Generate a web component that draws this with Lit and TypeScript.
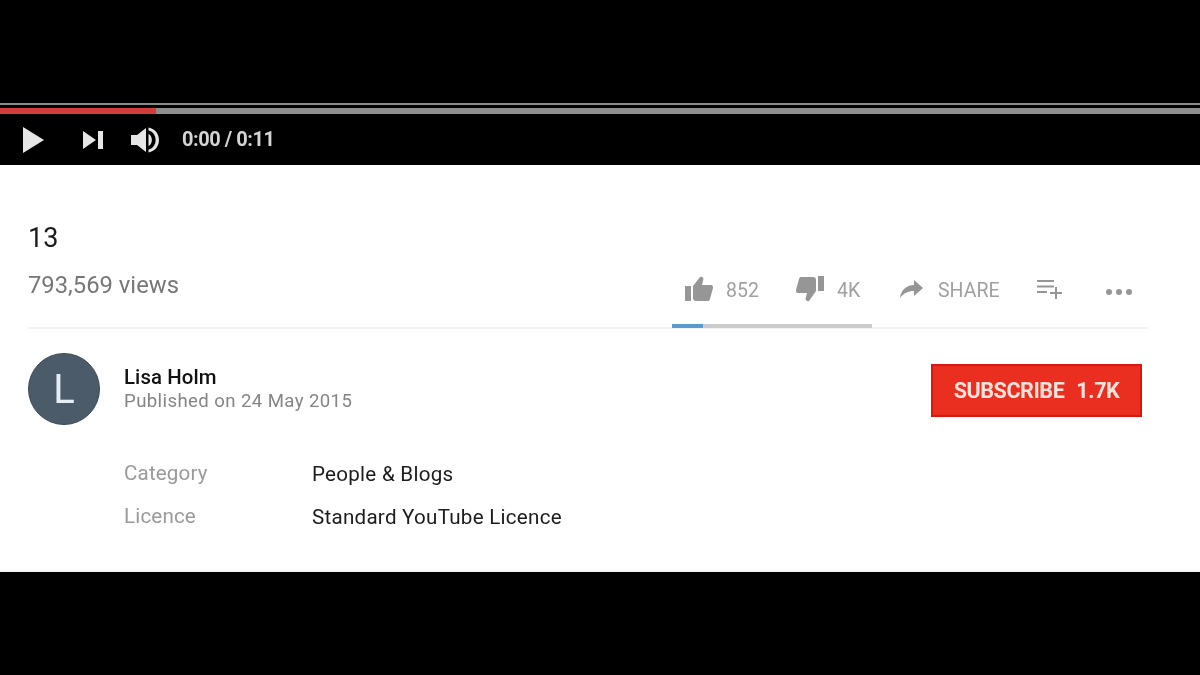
import { LitElement, html, css } from "lit";
import { customElement } from "lit/decorators.js";

@customElement("app-root")
export class AppRoot extends LitElement {
  static styles = css`
    :host { display: block; width: 1200px; height: 675px; background: #000; overflow: hidden; font-family: Roboto, "Liberation Sans", sans-serif; }
    .frame { filter: blur(0.4px); }
    .player { height: 165px; box-sizing: border-box; padding-top: 103px; background: #000; }
    .topline { height: 2px; background: #8a8a8a; }
    .progress { height: 6px; margin-top: 3px; background: #8f8f8f; }
    .played { width: 156px; height: 100%; background: #d23c3c; }
    .controls { display: flex; align-items: center; height: 51px; color: #e4e4e4; }
    .controls svg { display: block; fill: #e6e6e6; flex: none; }
    .play { margin-left: 22px; }
    .next { margin-left: 38px; }
    .vol { margin-left: 26px; }
    .time { margin: -2px 0 0 22px; font-size: 20px; font-weight: 700; letter-spacing: -0.45px; color: #d4d4d4; }
    .page { height: 407px; box-sizing: border-box; background: #fff; padding: 0 52px 0 28px; display: flex; flex-direction: column; border-bottom: 2px solid #f4f4f4; }
    .title { margin-top: 58px; font-size: 27px; line-height: 30px; color: #1c1c1c; }
    .meta { display: flex; height: 56px; border-bottom: 2px solid #f1f1f1; position: relative; margin-top: 18px; }
    .views { font-size: 23.8px; line-height: 26px; margin-top: 1px; color: #777; }
    .actions { position: absolute; left: 644px; top: 0; width: 476px; height: 57px; }
    .act { position: absolute; top: 5px; display: flex; align-items: center; gap: 13px; font-size: 19.5px; color: #a0a0a0; height: 28px; }
    .act svg { display: block; fill: #969696; flex: none; margin-top: -2px; }
    .sentiment { position: absolute; left: 0; bottom: 0; width: 200px; height: 4px; background: #cccccc; }
    .likes { width: 31px; height: 100%; background: #5b9bd0; }
    .owner { display: flex; align-items: center; margin-top: 24px; height: 72px; }
    .avatar { width: 72px; height: 72px; border-radius: 50%; background: #4c5b69; color: #e6eef5; display: flex; align-items: center; justify-content: center; font-size: 40px; font-weight: 400; flex: none; box-sizing: border-box; border: 1px solid #3b4752; }
    .who { margin-left: 24px; flex: 1; }
    .name { font-size: 20.4px; line-height: 24px; color: #111; letter-spacing: 0.1px; font-weight: 500; }
    .date { font-size: 18.6px; line-height: 24px; color: #858585; letter-spacing: 0.4px; }
    .sub { width: 211px; height: 53px; box-sizing: border-box; margin: 3px 6px 0 0; background: #ea2e20; border: 2px solid #d9170f; color: #fbe3dc; font-size: 21.5px; font-weight: 700; display: flex; align-items: center; justify-content: center; gap: 12px; letter-spacing: -0.4px; }
    .sub span + span { font-weight: 700; }
    .details { margin: 36px 0 0 96px; display: grid; grid-template-columns: 188px auto; justify-content: start; row-gap: 17px; font-size: 20.6px; line-height: 26px; }
    .k { color: #9a9a9a; letter-spacing: 0.15px; margin-top: -1px; }
    .v { color: #1c1c1c; letter-spacing: 0.25px; }
  `;

  render() {
    return html`
      <div class="frame">
      <div class="player">
        <div class="topline"></div>
        <div class="progress"><div class="played"></div></div>
        <div class="controls">
          <svg class="play" width="22" height="26" viewBox="0 0 22 26"><path d="M1 0 L22 13 L1 26 Z"/></svg>
          <svg class="next" width="22" height="20" viewBox="0 0 22 20"><path d="M1 1 L14 10 L1 19 Z"/><rect x="16" y="1" width="5" height="18"/></svg>
          <svg class="vol" width="30" height="28" viewBox="0 0 30 28"><path d="M1 9 H7 L16 2 V26 L7 19 H1 Z"/><path d="M18.5 8 C23 10 23 18 18.500 20 Z"/><path d="M18.5 1.500 C32.500 4 32.500 24 18.5 26.500 V23.500 C28 21.500 28 6.500 18.500 4.500 Z"/></svg>
          <span class="time">0:00 / 0:11</span>
        </div>
      </div>
      <div class="page">
        <div class="title">13</div>
        <div class="meta">
          <div class="views">793,569 views</div>
          <div class="actions">
            <div class="act" style="left:13px">
              <svg width="28" height="26" viewBox="0 0 28 26"><rect x="0" y="10" width="6" height="15"/><path d="M8 10 L15 1 C18 0 19 3 18 5 L17 9 H26 C28 9 28 11 28 12 L25 23 C24.500 25 23.500 25 22 25 H11 C9 25 8 24 8 22 Z"/></svg>
              <span>852</span>
            </div>
            <div class="act" style="left:124px">
              <svg width="28" height="26" viewBox="0 0 28 26"><rect x="22" y="0" width="6" height="15"/><path d="M20 15 L13 25 C10 26 9 23 10 21 L11 17 H2 C0 17 0 15 0 14 L3 3 C3.500 1 4.500 1 6 1 H17 C19 1 20 2 20 4 Z"/></svg>
              <span>4K</span>
            </div>
            <div class="act" style="left:228px">
              <svg width="23" height="18" viewBox="0 0 23 18"><path d="M14 0 L23 8 L14 16 V11 C8 11 4 13 0 18 C1 10 6 5.500 14 5 Z"/></svg>
              <span style="margin-left:2px">SHARE</span>
            </div>
            <div class="act" style="left:365px">
              <svg width="27" height="20" viewBox="0 0 27 20"><rect x="0" y="1" width="17" height="2"/><rect x="0" y="6.500" width="17" height="2"/><rect x="0" y="12" width="10" height="2"/><rect x="13" y="13" width="12" height="2"/><rect x="18" y="8" width="2" height="12"/></svg>
            </div>
            <div class="act" style="left:433px">
              <svg width="28" height="8" viewBox="0 0 28 8" style="margin-top:4px"><circle cx="4" cy="4" r="3"/><circle cx="14" cy="4" r="3"/><circle cx="24" cy="4" r="3"/></svg>
            </div>
            <div class="sentiment"><div class="likes"></div></div>
          </div>
        </div>
        <div class="owner">
          <div class="avatar">L</div>
          <div class="who">
            <div class="name">Lisa Holm</div>
            <div class="date">Published on 24 May 2015</div>
          </div>
          <div class="sub"><span>SUBSCRIBE</span><span>1.7K</span></div>
        </div>
        <div class="details">
          <div class="k">Category</div><div class="v">People &amp; Blogs</div>
          <div class="k">Licence</div><div class="v">Standard YouTube Licence</div>
        </div>
      </div>
      </div>
    `;
  }
}
